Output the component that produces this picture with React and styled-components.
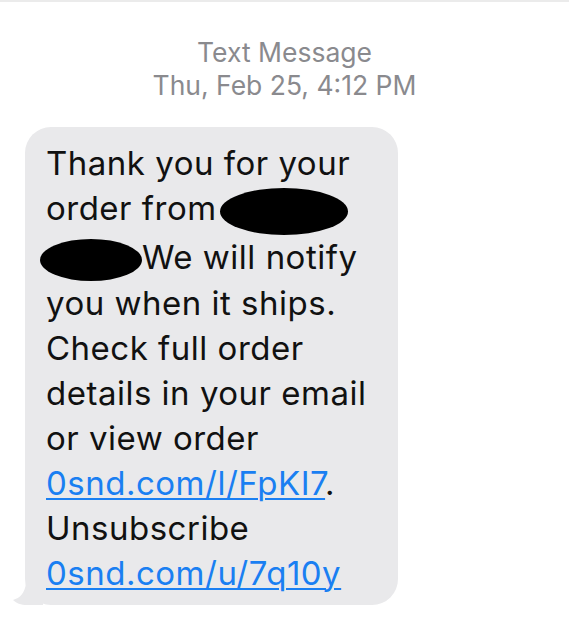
import React from 'react';
import styled, { createGlobalStyle } from 'styled-components';

const GlobalStyle = createGlobalStyle`
  html, body {
    margin: 0;
    padding: 0;
    background: #ffffff;
  }
  body {
    font-family: Inter, "Liberation Sans", Arial, sans-serif;
  }
`;

const Screen = styled.div`
  width: 569px;
  height: 634px;
  border-top: 2px solid #ebebeb;
  box-sizing: border-box;
  overflow: hidden;
`;

const Header = styled.div`
  padding-top: 34px;
  text-align: center;
  color: #8a8a8e;
  font-size: 26.5px;
  line-height: 33px;
`;

const Thread = styled.div`
  padding: 25px 0 0 25px;
`;

const Bubble = styled.div`
  position: relative;
  width: 373px;
  box-sizing: border-box;
  background: #e9e9eb;
  border-radius: 26px;
  padding: 14px 8px 9px 21px;
  color: #111111;
  font-size: 33px;
  letter-spacing: 0.5px;
  line-height: 45px;
`;

const Tail = styled.svg`
  position: absolute;
  left: -12px;
  bottom: 0;
`;

const Redacted = styled.span`
  display: inline-block;
  width: ${p => p.w}px;
  height: ${p => p.h}px;
  background: #000;
  border-radius: 50%;
  vertical-align: middle;
  margin: ${p => p.m || '0'};
`;

const Link = styled.a`
  color: #1a7ff2;
  text-decoration: underline;
  text-decoration-thickness: 2px;
  text-underline-offset: 3px;
`;

export default function App() {
  return (
    <>
      <GlobalStyle />
      <Screen>
        <Header>
          <div>Text Message</div>
          <div>Thu, Feb 25, 4:12 PM</div>
        </Header>
        <Thread>
          <Bubble>
            <Tail width="30" height="22" viewBox="0 0 30 22">
              <path d="M30 0 L30 22 L14 22 C8 22 3 20 0 17 C7 15 12 10 13 0 Z" fill="#e9e9eb" />
            </Tail>
            Thank you for your
            <br />
            order from <Redacted w={128} h={47} m="0 0 0 -6px" />
            <br />
            <Redacted w={102} h={42} m="0 0 0 -6px" />We will notify
            <br />
            you when it ships.
            <br />
            Check full order
            <br />
            details in your email
            <br />
            or view order
            <br />
            <Link>0snd.com/l/FpKI7</Link>.
            <br />
            Unsubscribe
            <br />
            <Link>0snd.com/u/7q10y</Link>
          </Bubble>
        </Thread>
      </Screen>
    </>
  );
}
